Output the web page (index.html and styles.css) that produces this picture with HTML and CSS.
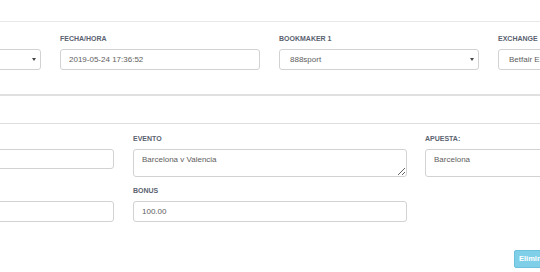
FILE: index.html
```html
<!DOCTYPE html>
<html lang="es">
<head>
<meta charset="utf-8">
<title>Apuesta</title>
<link rel="stylesheet" href="styles.css">
</head>
<body>
<div class="page">
  <div class="top-space"></div>
  <section class="panel panel-main">
    <div class="row row-main">
      <div class="field">
        <label class="lbl">&nbsp;</label>
        <div class="select-wrap"><select class="ctl"><option></option></select></div>
      </div>
      <div class="field">
        <label class="lbl">FECHA/HORA</label>
        <input class="ctl" type="text" value="2019-05-24 17:36:52">
      </div>
      <div class="field">
        <label class="lbl">BOOKMAKER 1</label>
        <div class="select-wrap"><select class="ctl sel"><option>888sport</option></select></div>
      </div>
      <div class="field">
        <label class="lbl">EXCHANGE</label>
        <div class="select-wrap"><select class="ctl sel"><option>Betfair Exchange</option></select></div>
      </div>
    </div>
  </section>
  <div class="band"></div>
  <section class="panel panel-bet">
    <div class="row row-bet">
      <div class="field">
        <label class="lbl">&nbsp;</label>
        <input class="ctl" type="text" value="">
      </div>
      <div class="field">
        <label class="lbl">EVENTO</label>
        <textarea class="ctl area">Barcelona v Valencia</textarea>
      </div>
      <div class="field">
        <label class="lbl">APUESTA:</label>
        <textarea class="ctl area noresize">Barcelona</textarea>
      </div>
    </div>
    <div class="row row-bet">
      <div class="field">
        <label class="lbl">&nbsp;</label>
        <input class="ctl" type="text" value="">
      </div>
      <div class="field">
        <label class="lbl">BONUS</label>
        <input class="ctl" type="text" value="100.00">
      </div>
      <div class="field"></div>
    </div>
    <div class="actions">
      <button class="btn-info" type="button">Eliminar</button>
    </div>
  </section>
</div>
</body>
</html>
```
FILE: styles.css
```css
html, body {
  margin: 0;
  padding: 0;
  background: #ffffff;
}
body {
  font-family: "Liberation Sans", Arial, Helvetica, sans-serif;
  color: #555555;
}
.page {
  width: 540px;
  height: 272px;
  overflow: hidden;
}
.top-space {
  height: 21px;
}
.panel-main {
  border-top: 1px solid #e8e8e8;
  border-bottom: 2px solid #e0e0e0;
  padding: 12px 0 24px;
}
.row {
  display: flex;
}
.row-main {
  gap: 19px;
  margin-left: -159px;
}
.row-main .field {
  flex: 0 0 200px;
}
.row-bet {
  gap: 19px;
  margin-left: -160px;
}
.row-bet .field {
  flex: 0 0 274px;
}
.row-bet .field:nth-child(3) {
  margin-left: -1px;
}
.lbl {
  display: block;
  font-size: 7px;
  font-weight: 700;
  line-height: 10px;
  color: #5a6270;
  margin-bottom: 5px;
  white-space: nowrap;
}
.ctl {
  box-sizing: border-box;
  display: block;
  width: 100%;
  height: 21px;
  margin: 0;
  padding: 0 8px;
  border: 1px solid #d2d2d2;
  border-radius: 3px;
  background: #ffffff;
  font-family: "Liberation Sans", Arial, Helvetica, sans-serif;
  font-size: 8px;
  color: #5e5e5e;
  outline: none;
}
select.ctl {
  -webkit-appearance: none;
  appearance: none;
}
.sel {
  padding-left: 10px;
}
.select-wrap {
  position: relative;
}
.select-wrap::after {
  content: "";
  position: absolute;
  right: 5px;
  top: 9px;
  border-left: 2px solid transparent;
  border-right: 2px solid transparent;
  border-top: 3px solid #444444;
}
.band {
  height: 27px;
  border-bottom: 1px solid #dedede;
}
.panel-bet {
  padding-top: 10px;
}
.area {
  height: 28px;
  padding: 4px 8px;
  line-height: 11px;
  resize: vertical;
  overflow: hidden;
}
.noresize {
  resize: none;
}
.row-bet + .row-bet {
  margin-top: 9px;
}
.row-bet:first-child .field:first-child .ctl {
  height: 20px;
}
.actions {
  padding-left: 514px;
  margin-top: 25px;
  white-space: nowrap;
}
.btn-info {
  height: 18px;
  padding: 0 4px;
  border: 1px solid #6cc2dd;
  border-radius: 2px;
  background: #7fcfe8;
  color: #ffffff;
  font-family: "Liberation Sans", Arial, Helvetica, sans-serif;
  font-size: 7.5px;
  font-weight: 700;
  line-height: 16px;
}
```
